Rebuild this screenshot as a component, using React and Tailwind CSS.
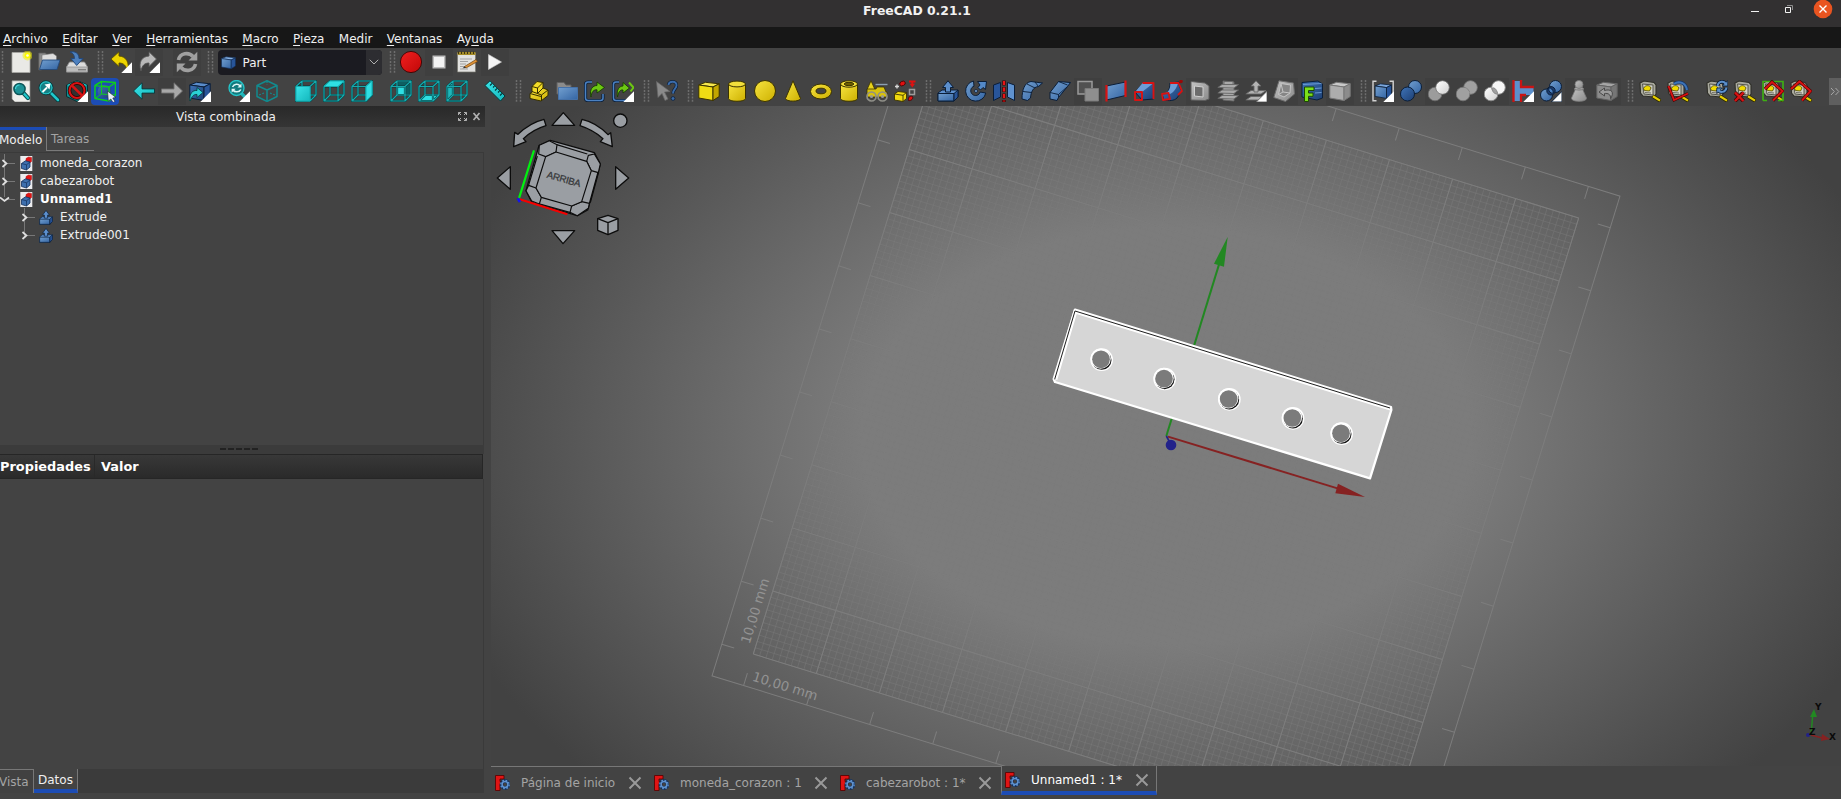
import React from "react";

const GRID_BIG = Array.from({ length: 11 }, (_, i) => i * 66);
const GRID_SMALL = Array.from({ length: 101 }, (_, i) => i * 6.6);

function Defs() {
  const g = (id, a, b) => (
    <linearGradient id={id} x1="0" y1="0" x2="1" y2="1">
      <stop offset="0" stopColor={a} />
      <stop offset="1" stopColor={b} />
    </linearGradient>
  );
  return (
    <svg width="0" height="0" className="absolute" aria-hidden="true">
      <defs>
        {g("gb", "#729fcf", "#3465a4")}
        {g("gd", "#3f74b8", "#1d3f73")}
        {g("gy", "#f7e440", "#cdb000")}
        {g("gc", "#3be4e8", "#14b8bd")}
        {g("gg", "#c4c4c4", "#8a8a8a")}
        {g("gr", "#f22020", "#c00808")}
        {g("gw", "#ffffff", "#cfcfcf")}
      </defs>
    </svg>
  );
}

const Corner = () => <path d="M22 11.300V22H11.300z" fill="#fff" />;

const Frame = ({ c = "#17a9ad" }) => (
  <g fill="none" strokeLinejoin="round">
    <path d="M1 6.500H15V21H1zM7 1H21V15H7zM1 6.500L7 1M15 6.500L21 1M15 21L21 15M1 21L7 15" stroke="#06393b" strokeWidth="2.200" />
    <path d="M1 6.500H15V21H1zM7 1H21V15H7zM1 6.500L7 1M15 6.500L21 1M15 21L21 15M1 21L7 15" stroke={c} strokeWidth="1.200" />
  </g>
);

const Tape = () => (
  <g>
    <path d="M1 3L5 1L15 2.500L17 5V14L15 17L4 16L1.500 13z" fill="#a9a99d" stroke="#2f2f29" strokeWidth="1.100" />
    <path d="M3.500 4L14 5V15L5 14z" fill="#d3d3c8" stroke="#55554c" strokeWidth="1" />
    <path d="M4.500 8.500C6 4.500 11 5 12 8L10.500 11L5.500 10.500z" fill="#f0da00" stroke="#4d4600" strokeWidth=".8" />
    <path d="M6 12.500L12 13" stroke="#6f6f66" strokeWidth="1.200" />
    <path d="M13.500 16L21.500 21" stroke="#2d2900" strokeWidth="3.800" />
    <path d="M14 16.300L21 20.600" stroke="#e6ce00" strokeWidth="2.200" />
  </g>
);

const Extrude = () => (
  <g stroke="#0b1e38" strokeWidth="1" strokeLinejoin="round">
    <path d="M1 13L5 10H21V17L17 21H1z" fill="#5c8fcd" />
    <path d="M1 13.500H17V21H1z" fill="url(#gb)" />
    <path d="M17 13.500L21 10V17L17 21z" fill="#28559a" />
    <path d="M8.500 12V7.500H5.500L11 .8L16.500 7.500H13.500V12z" fill="#5c8fcd" />
  </g>
);

const Box = ({ a, b, c, s }) => (
  <g stroke={s} strokeWidth="1" strokeLinejoin="round">
    <path d="M.8 5L7.500 2.300L21.200 3.800L15 7z" fill={b} />
    <path d="M.8 5L15 7V20.500L.8 18z" fill={a} />
    <path d="M15 7L21.200 3.800V16.500L15 20.500z" fill={c} />
  </g>
);

const SyncBlue = () => (
  <g fill="none">
    <path d="M11.500 6C12.500 .5 18.500 .5 20 4.500M20.500 7.500C19.500 13 13.500 13 12 9.500" stroke="#0b1e38" strokeWidth="3.600" />
    <path d="M21.800 .5V6H16.300zM10.800 13.500V8H16.300z" fill="#5c90cc" stroke="#0b1e38" strokeWidth=".8" />
    <path d="M11.500 6C12.500 .5 18.500 .5 20 4.500M20.500 7.500C19.500 13 13.500 13 12 9.500" stroke="#5c90cc" strokeWidth="2" />
  </g>
);

const ICONS = {
  newdoc: (
    <g>
      <path d="M2 1.500H20V21.500H2z" fill="#e9e9e6" stroke="#a8a8a5" strokeWidth=".8" />
      <circle cx="17.500" cy="4.500" r="5" fill="#f4f000" opacity=".5" />
      <circle cx="17.500" cy="4.500" r="3" fill="#fdf900" />
      <circle cx="17.500" cy="4.500" r="1.300" fill="#fffde0" />
    </g>
  ),
  open: (
    <g>
      <path d="M.8 2H7.500L9 4H17V12L3 19H.8z" fill="#8b8b8b" stroke="#5a5a5a" strokeWidth=".8" />
      <path d="M4 4L15 2.500L18.500 5V13H4z" fill="#dedede" stroke="#777" strokeWidth=".6" />
      <path d="M4.500 9H22L19 18.500H1.500z" fill="url(#gb)" stroke="#24497c" strokeWidth=".9" />
    </g>
  ),
  save: (
    <g>
      <path d="M3.500 11H18.500L21.500 16V21H.5V16z" fill="#dcdcdc" stroke="#8d8d8d" strokeWidth=".9" />
      <path d="M.5 16H21.500V21H.5z" fill="#bdbdbd" stroke="#8d8d8d" strokeWidth=".7" />
      <path d="M12 18.700H20" stroke="#7f7f7f" strokeWidth="1.400" />
      <path d="M4 1C9 0 13 2 13 7.500H17L10.700 14.500L5 7.500H8.500C8.500 4 7 2 4 1z" fill="#4d80be" stroke="#1f467c" strokeWidth=".9" />
    </g>
  ),
  undo: (
    <g>
      <path d="M1 8L9 .8V5C16 5.500 20 11 17.500 21C16.500 14.500 13.500 12 9 12V15.500z" fill="#edd400" stroke="#5b4f00" strokeWidth=".9" />
      <Corner />
    </g>
  ),
  redo: (
    <g>
      <path d="M18.500 8L11 .8V5C4 5.500 0 11 3 20C4 14.500 6.500 12 11 12V15.500z" fill="#b9b9b9" stroke="#555" strokeWidth=".9" />
      <Corner />
    </g>
  ),
  refresh: (
    <g fill="none">
      <path d="M2.500 9C4 1.500 13 1 17 5.500M19.500 13C18 20.500 9 21 5 16.500" stroke="#a0a0a0" strokeWidth="3.600" />
      <path d="M21.300 .8V9.500H12.500zM.8 21.200V12.500H9.500z" fill="#a0a0a0" />
    </g>
  ),
  record: <circle cx="11" cy="11" r="10.600" fill="url(#gr)" stroke="#3c0303" strokeWidth=".9" />,
  stop: (
    <g>
      <path d="M4.500 4.500H17.500V17.500H4.500z" fill="#bcbcbc" />
      <path d="M6 6H16V16H6z" fill="#f3f3f3" />
    </g>
  ),
  macro: (
    <g>
      <path d="M1.500 2H19.500V21H1.500z" fill="#e2e2e0" stroke="#77776f" strokeWidth=".7" />
      <path d="M1.500 1H19.500V4H1.500z" fill="#a48c28" />
      <path d="M2.500 .5V3M5.500 .5V3M8.500 .5V3M11.500 .5V3M14.500 .5V3M17.500 .5V3" stroke="#3d3410" />
      <path d="M4 8H16M4 10.500H12M4 13H10M4 15.500H9M4 18H12" stroke="#9b9b9b" strokeWidth=".9" />
      <path d="M8.500 15.500L20 8.500L21.500 10.500L10 17z" fill="#e09338" stroke="#6e430f" strokeWidth=".7" />
      <path d="M6.500 17.300L8.500 15.500L10 17z" fill="#333" />
    </g>
  ),
  play: <path d="M4.500 3.500L17.500 11L4.500 18.500z" fill="#f5f5f5" stroke="#cfcfcf" strokeWidth=".6" />,

  fitall: (
    <g>
      <path d="M2 .8H20V22H5L2 19z" fill="#efefec" stroke="#8b8b87" strokeWidth=".7" />
      <path d="M13 12.500L18 18" stroke="#0a5053" strokeWidth="4.200" strokeLinecap="round" />
      <path d="M13 12.500L18 18" stroke="#1fc6ca" strokeWidth="2.300" strokeLinecap="round" />
      <circle cx="9.500" cy="9" r="5.600" fill="#1c9296" stroke="#0b5558" strokeWidth="1.500" />
      <path d="M5.500 9A4 4 0 0 1 9.500 5" stroke="#43d5d8" strokeWidth="1.200" fill="none" />
    </g>
  ),
  fitsel: (
    <g>
      <path d="M12 12L20 20" stroke="#063a3c" strokeWidth="4.500" strokeLinecap="round" />
      <path d="M12 12L20 20" stroke="#1fc6ca" strokeWidth="2.600" strokeLinecap="round" />
      <circle cx="8" cy="7.800" r="7" fill="#138085" stroke="#063a3c" />
      <circle cx="8" cy="7.800" r="6" fill="none" stroke="#25c6ca" strokeWidth="1.100" />
      <path d="M4.500 12L9 7.500" stroke="#fff" strokeWidth="1.800" />
      <path d="M6.500 4.500L12.500 3.500L11.500 9.500z" fill="#fff" />
    </g>
  ),
  drawstyle: (
    <g>
      <path d="M11 .5L21.500 5V16.500L11 21.500L.5 16.500V5z" fill="#128a8e" stroke="#062f31" />
      <path d="M11 .8L21 5L11 9L1 5z" fill="#25c6ca" />
      <circle cx="11" cy="10.500" r="7.500" fill="#32302f" stroke="#2a0000" strokeWidth="3.500" />
      <path d="M5.800 5.300L16.200 15.700" stroke="#d81313" strokeWidth="2.600" />
      <circle cx="11" cy="10.500" r="7.500" fill="none" stroke="#d81313" strokeWidth="2.100" />
      <Corner />
    </g>
  ),
  selview: (
    <g>
      <circle cx="10.500" cy="11.500" r="6.800" fill="url(#gd)" />
      <g fill="none" stroke="#0fce1c" strokeWidth="1.500" strokeLinejoin="round">
        <path d="M1 5.500L15 7V21L1 18.500zM1 5.500L7.500 1.500L21.500 2.500L15 7M21.500 2.500V15L15 21" />
        <path d="M7.500 1.500V14L21 15M7.500 14L1 18.500" strokeWidth="1" />
      </g>
      <path d="M13.500 11L22 17.500L18.800 18L21 21.500L19 22.500L16.800 19L14.300 21.200z" fill="#e8eef8" stroke="#24303f" strokeWidth=".7" />
    </g>
  ),
  back: <path d="M.5 11L9 2.800V8.900H21.500V13.100H9V19.200z" fill="url(#gc)" stroke="#06393b" strokeWidth=".9" />,
  forward: <path d="M21.500 11L13 2.800V8.900H.5V13.100H13V19.200z" fill="#a8a8a8" stroke="#6d6d6d" strokeWidth=".9" />,
  link: (
    <g>
      <Box a="url(#gd)" b="#5a8cca" c="#28559a" s="#0b1e38" />
      <path d="M1 21C0 13 4 10 8 10.500V7.500L14 12.500L8 17.500V14.500C5 14 3 16 1 21z" fill="#2bd0d4" stroke="#063a3c" strokeWidth=".8" />
      <Corner />
    </g>
  ),
  zoom: (
    <g>
      <path d="M13 13L20 20" stroke="#1fb4b8" strokeWidth="3.400" />
      <circle cx="8.500" cy="8" r="7.500" fill="#127a7e" stroke="#25c6ca" strokeWidth="1.300" />
      <path d="M4.500 7C6 3.500 10.500 3.500 12 6M12.800 9.500C11.500 12.500 6.500 12.500 5 10" fill="none" stroke="#dff6f6" strokeWidth="1.500" />
      <path d="M13.500 3.500V7.500H9.500zM3.600 12.800V8.800H7.600z" fill="#dff6f6" />
      <Corner />
    </g>
  ),
  iso: (
    <g fill="none" stroke="#128a8e" strokeWidth="1.500" strokeLinejoin="round">
      <path d="M11 .8L21 5.500V16.500L11 21.500L1 16.500V5.500zM1 5.500L11 10L21 5.500M11 10V21.500" />
      <path d="M11 1V5M3 15L8 13M19 15L14 13" strokeDasharray="2 1.500" strokeWidth="1.200" />
    </g>
  ),
  front: (
    <g>
      <Frame />
      <path d="M1 6.500H15V21H1z" fill="url(#gc)" stroke="#17b0b4" />
    </g>
  ),
  top: (
    <g>
      <Frame />
      <path d="M1 6.500L7 1H21L15 6.500z" fill="#2fdfe3" stroke="#17b0b4" />
    </g>
  ),
  right: (
    <g>
      <Frame />
      <path d="M15 6.500L21 1V15L15 21z" fill="#2fdfe3" stroke="#17b0b4" />
    </g>
  ),
  rear: (
    <g>
      <path d="M7 6.500H15V15H7z" fill="#2fdfe3" />
      <path d="M7 1H21V15H15V6.500H7z" fill="#0d5f62" />
      <Frame />
    </g>
  ),
  bottom: (
    <g>
      <path d="M1 21L7 15H21L15 21z" fill="#2fdfe3" />
      <Frame />
    </g>
  ),
  left: (
    <g>
      <path d="M1 6.500L7 1V15L1 21z" fill="#1fb6ba" />
      <Frame />
    </g>
  ),
  ruler: (
    <g>
      <path d="M1 5.500L6 .8L21 16L16.500 21z" fill="url(#gc)" stroke="#06393b" />
      <path d="M8 3.500L6 5.500M10.500 6L9 7.500M13 8.500L11 10.500M15.500 11L14 12.500M18 13.500L16 15.500" stroke="#06393b" strokeWidth="1.100" />
    </g>
  ),

  part: (
    <g stroke="#352e00" strokeWidth="1" strokeLinejoin="round">
      <path d="M2 13.500L6 10.500L15 8L20 10V15.500L13 21L2 18.500z" fill="url(#gy)" />
      <path d="M4 6.500L9 1.500L15 2.500V8L9.500 13.500L4 11.500z" fill="#f3dc28" />
      <path d="M4 6.500L9.500 8L15 2.500M9.500 8V13.500L13.500 15L20 10M13.500 15V21M2 13.500L13 16.500" fill="none" />
    </g>
  ),
  folder: (
    <g>
      <path d="M1 2.500H8L10 5H15V14H1z" fill="#8b8b8b" stroke="#606060" />
      <path d="M2.500 7.500H21.500V19.500H2.500z" fill="url(#gb)" stroke="#4571a8" />
    </g>
  ),
  linkmake: (
    <g>
      <path d="M8 2H4Q1.500 2 1.500 4.500V18Q1.500 20.500 4 20.500H16.500Q19 20.500 19 18V14" fill="none" stroke="#0b1e38" strokeWidth="3.200" />
      <path d="M8 2H4Q1.500 2 1.500 4.500V18Q1.500 20.500 4 20.500H16.500Q19 20.500 19 18V14" fill="none" stroke="#4b82c3" strokeWidth="1.500" />
      <path d="M7 17C5 9 9 5.500 13 5.500V2L20.500 7.500L13 13V9.800C9.500 9.500 7.500 12 7 17z" fill="#6cc712" stroke="#173d02" strokeWidth=".9" />
    </g>
  ),
  linkmore: (
    <g>
      <path d="M7 2H4Q1.500 2 1.500 4.500V18Q1.500 20.500 4 20.500H15" fill="none" stroke="#0b1e38" strokeWidth="3.200" />
      <path d="M7 2H4Q1.500 2 1.500 4.500V18Q1.500 20.500 4 20.500H15" fill="none" stroke="#4b82c3" strokeWidth="1.500" />
      <path d="M5.500 17C4 9 8 6 11 6V2.500L17.500 8L11 13V10C8 9.500 6.500 12 5.500 17z" fill="#6cc712" stroke="#173d02" strokeWidth=".9" />
      <path d="M17 2.500L21.500 7.500L18.500 11.500" fill="none" stroke="#6cc712" strokeWidth="2" />
      <Corner />
    </g>
  ),
  whats: (
    <g>
      <path d="M.5 1.500L14 11.500L8.500 12L12 19L9 20.500L6 13.500L2 17.500z" fill="#8a8a8a" stroke="#676767" strokeWidth=".7" />
      <path d="M12.500 5C13 .5 21 .5 20.500 5.500C20.300 9 17 9 17 13.500" fill="none" stroke="#0b1e38" strokeWidth="3.300" />
      <path d="M12.500 5C13 .5 21 .5 20.500 5.500C20.300 9 17 9 17 13.500" fill="none" stroke="#3b6cab" strokeWidth="1.900" />
      <circle cx="17" cy="18.500" r="1.900" fill="#3b6cab" stroke="#0b1e38" strokeWidth=".8" />
    </g>
  ),

  cube: <Box a="#f0dc14" b="#f6e74e" c="#c2a600" s="#3b3300" />,
  cylinder: (
    <g stroke="#3b3300" strokeWidth="1">
      <path d="M2.500 4V18.500C2.500 22.200 19.500 22.200 19.500 18.500V4" fill="url(#gy)" />
      <ellipse cx="11" cy="4" rx="8.500" ry="2.900" fill="#f2df3c" />
    </g>
  ),
  sphere: <circle cx="11" cy="11" r="10.500" fill="url(#gy)" stroke="#3b3300" />,
  cone: <path d="M11 .8L18.500 18.500C18 22 4 22 3.500 18.500z" fill="url(#gy)" stroke="#3b3300" />,
  torus: (
    <g stroke="#3b3300">
      <ellipse cx="11" cy="11.500" rx="10.500" ry="7.500" fill="url(#gy)" />
      <ellipse cx="11" cy="11" rx="5" ry="2.800" fill="#444" />
    </g>
  ),
  tube: (
    <g stroke="#3b3300" strokeWidth="1">
      <path d="M2.500 4V18.500C2.500 22.200 19.500 22.200 19.500 18.500V4" fill="url(#gy)" />
      <ellipse cx="11" cy="4" rx="8.500" ry="3.200" fill="#f2df3c" />
      <ellipse cx="11" cy="4" rx="4.800" ry="1.700" fill="#6d5e00" />
    </g>
  ),
  primitives: (
    <g>
      <path d="M5 .8L9 9.500H1z" fill="#e8d31a" stroke="#3b3300" strokeWidth=".8" />
      <path d="M9.500 4.500H21.500" stroke="#8ca0b2" strokeWidth="1.400" />
      <path d="M1 9H10L11 7H18L20 12H21V17H1z" fill="#d8c20e" stroke="#3b3300" strokeWidth=".8" />
      <g fill="none" stroke="#8f8f88" strokeWidth="1.700">
        <circle cx="5.500" cy="16.500" r="4.500" />
        <circle cx="16.500" cy="16.500" r="4.500" />
      </g>
      <circle cx="5.500" cy="16.500" r="1.600" fill="#9a9a94" />
      <circle cx="16.500" cy="16.500" r="1.600" fill="#9a9a94" />
    </g>
  ),
  builder: (
    <g>
      <path d="M.5 14L4 11.500L12.500 12.500V18.500L9 21.500L.5 20z" fill="#efd90f" stroke="#3b3300" strokeWidth=".9" />
      <path d="M.5 14L9 15.300L12.500 12.500M9 15.300V21.500" fill="none" stroke="#3b3300" strokeWidth=".9" />
      <path d="M3 4.500V8.500M1 6.500H5" stroke="#d8d8d8" strokeWidth="1.400" />
      <ellipse cx="8.500" cy="3.500" rx="2.900" ry="2.200" transform="rotate(-25 8.500 3.500)" fill="#df1010" stroke="#400" strokeWidth=".8" />
      <path d="M15 1.500H21.500M18.300 1.500V5" stroke="#df1010" strokeWidth="2" />
      <path d="M15.500 3.800L18.300 7.500L21 3.800z" fill="#df1010" />
      <path d="M15.500 9.500H20.500V14.500H15.500z" fill="none" stroke="#9c9c9c" strokeWidth="1.500" />
      <path d="M14.500 20.500C14 17 16 15.500 18.500 16.500C19.500 18.500 17.500 21 14.500 20.500z" fill="#df1010" stroke="#400" strokeWidth=".8" />
    </g>
  ),

  extrude: <Extrude />,
  revolve: (
    <g>
      <path d="M8.500 1A10.200 10.200 0 1 0 20.800 13L15.200 12A4.800 4.800 0 1 1 9 6.200z" fill="url(#gb)" stroke="#0b1e38" />
      <path d="M12.500 1.500L21.500 1.500L20.500 9.500L18 7.500L15.500 10L13 7.500L15 5z" fill="#5389c9" stroke="#0b1e38" />
      <circle cx="11" cy="11" r="1.500" fill="#7aa7dc" stroke="#0b1e38" strokeWidth=".8" />
    </g>
  ),
  mirror: (
    <g strokeLinejoin="round">
      <path d="M.5 5L7.500 2.500V17L.5 20.500z" fill="#28559a" stroke="#0b1e38" />
      <path d="M14.500 2.500L21.500 5V20.500L14.500 17z" fill="#5f92cf" stroke="#0b1e38" />
      <path d="M11 .5V22" stroke="#4a0000" strokeWidth="3.400" strokeDasharray="5 1.500" />
      <path d="M11 1V21.500" stroke="#e81515" strokeWidth="2.100" strokeDasharray="4 2.500" />
    </g>
  ),
  fillet: (
    <g stroke="#0b1e38" strokeLinejoin="round">
      <path d="M1 19C1 10 3.500 2.500 10 1.500L21.500 3L17.500 6.500C12 7 10 12 9.500 18L6.500 20.500z" fill="url(#gb)" />
      <path d="M2 11.500L10.500 12.500M6 4L14 8M14 2L17.500 6.500" fill="none" strokeWidth=".9" />
    </g>
  ),
  chamfer: (
    <g stroke="#0b1e38" strokeLinejoin="round">
      <path d="M9.500 1.500L21.500 2.500L18.500 6.500L9.500 17.500L8 20.500L1 19V12.500z" fill="url(#gb)" />
      <path d="M1 12.500L9.500 14.500L18.500 6.500M9.500 14.500V17.500M9.500 1.500L18.500 5" fill="none" strokeWidth=".9" />
    </g>
  ),
  face: (
    <g stroke="#7a7a7a">
      <path d="M1 1.500H15V14H1z" fill="#515151" stroke="#9a9a9a" strokeWidth="1.500" />
      <path d="M8 8.500H21.500V21H8z" fill="#8f8f8f" />
    </g>
  ),
  ruled: (
    <g>
      <path d="M1.500 6L20.500 2V15.500L1.500 20z" fill="url(#gb)" stroke="#0b1e38" />
      <path d="M1.500 5V21.500M20.500 .5V17" stroke="#d81313" strokeWidth="2.200" />
    </g>
  ),
  loft: (
    <g strokeLinejoin="round">
      <path d="M2 12L10 3H20.500V19L9 20z" fill="url(#gd)" stroke="#0b1e38" />
      <path d="M2 12L9.500 3L20 3.500L9 12z" fill="#6d9dd6" />
      <path d="M2 12H9V20H2zM9.500 3H20.500V19" fill="none" stroke="#d81313" strokeWidth="1.900" />
    </g>
  ),
  sweep: (
    <g strokeLinejoin="round">
      <path d="M1 14C7 14 9 9 9 3L18 2C18 7 19 8 21 11L16 18C13 21 8 21 3 20z" fill="url(#gd)" stroke="#0b1e38" />
      <path d="M4 13C8 12 9.500 8 9.500 3L17 2.500C16 8 13 12 9 14z" fill="#6d9dd6" />
      <path d="M1 14L7.500 13L9 19L2 20zM9 3L17.500 3L21 11L17 15" fill="none" stroke="#d81313" strokeWidth="1.800" />
      <circle cx="20" cy="1.500" r="1.800" fill="#9a0808" />
    </g>
  ),
  section: (
    <g stroke="#5d5d5d">
      <path d="M2 1.500L16 3L20 6V19L16 20.500L2 20z" fill="url(#gg)" />
      <path d="M5.500 6L14 7V17L5.500 16z" fill="#6c6c6c" stroke="#cfcfcf" />
    </g>
  ),
  sections: (
    <g stroke="#666" fill="#a9a9a9" strokeWidth=".9">
      <path d="M6 1L17 2V21L6 20z" />
      <path d="M.8 7.500L5 4.500H21.500L17 8zM.8 13L5 10H21.500L17 13.500zM.8 18.500L5 15.500H21.500L17 19z" />
      <path d="M7 1.500H16V4.500H7z" />
    </g>
  ),
  offset: (
    <g stroke="#666" fill="#b2b2b2" strokeWidth=".9">
      <path d="M.8 14L6 10.500H21L16 14zM.8 20L6 16.500H21L16 20z" />
      <path d="M9 12V6H6L11 .8L16 6H13V12z" />
      <Corner />
    </g>
  ),
  thickness: (
    <g stroke="#6c6c6c" strokeLinejoin="round">
      <path d="M6 .8L20.500 3L21.500 14L12.500 21.500L.8 17.500z" fill="url(#gg)" />
      <path d="M8 3.500L17.500 5L17 13L11 17L5.500 14.500z" fill="#868686" stroke="#c4c4c4" />
      <path d="M8 3.500L10 12L17 13M10 12L5.500 14.500" fill="none" stroke="#c4c4c4" />
    </g>
  ),
  projection: (
    <g>
      <path d="M1 2.500L17 1L21.500 4V18L16 20L1 17z" fill="url(#gd)" stroke="#0b1e38" />
      <path d="M2 4.500L20.500 3.500M14 8.500L20.500 8M14 13L20.500 12.500" stroke="#6a9ad3" />
      <path d="M3.500 7H13V10.500H7.500V13H12V16.300H7.500V21.500H3.500z" fill="#7be01a" stroke="#1d4a02" />
    </g>
  ),
  graybox: <Box a="#adadad" b="#c9c9c9" c="#8c8c8c" s="#777" />,

  compound: (
    <g>
      <g transform="translate(2.500 2) scale(.8)">
        <Box a="url(#gb)" b="#7ba7dc" c="#28559a" s="#0b1e38" />
      </g>
      <path d="M4.500 1.200H1V20.800H4.500M17.500 1.200H21.200V20.800" fill="none" stroke="#d2d2d2" strokeWidth="1.400" />
      <Corner />
    </g>
  ),
  union: (
    <g stroke="#0b1e38">
      <circle cx="15" cy="7" r="6.500" fill="url(#gb)" />
      <circle cx="7.500" cy="14" r="7" fill="url(#gd)" />
    </g>
  ),
  cut: (
    <g stroke="#6c6c6c" strokeWidth=".8">
      <circle cx="7" cy="14" r="6.800" fill="#9c9c9c" />
      <circle cx="14.500" cy="7.500" r="6.800" fill="url(#gw)" />
    </g>
  ),
  fuse: (
    <g fill="#a0a0a0" stroke="#777" strokeWidth=".8">
      <circle cx="14.500" cy="7.500" r="6.800" />
      <circle cx="7" cy="14" r="6.800" />
      <path d="M10 8L14 13L9 14z" stroke="none" />
    </g>
  ),
  common: (
    <g stroke="#8a8a8a" strokeWidth=".9">
      <circle cx="7" cy="14" r="6.800" fill="url(#gw)" />
      <circle cx="14.500" cy="7.500" r="6.800" fill="#f6f6f6" />
      <path d="M7.800 8.200Q11.500 6.500 13.800 13.400Q10 15.500 7.800 8.200z" fill="#a0a0a0" />
    </g>
  ),
  join: (
    <g>
      <path d="M1.500 1H8.500V21H1.500zM8.500 7H21.500V15H8.500z" fill="#5c90cc" />
      <path d="M1.500 0V22M9 0V7H22M9 22V15H14" fill="none" stroke="#c81414" strokeWidth="2.300" />
      <Corner />
    </g>
  ),
  split: (
    <g stroke="#0b1e38">
      <circle cx="15.500" cy="6.500" r="6" fill="url(#gb)" />
      <circle cx="6.500" cy="15" r="6" fill="url(#gb)" />
      <circle cx="11" cy="10.800" r="4.200" fill="#1b3c70" />
      <path d="M8.500 8Q12.500 7.500 13.500 13Q9 14 8.500 8z" fill="#4b82c3" stroke="#0b1e38" strokeWidth=".9" />
      <Corner />
    </g>
  ),
  pawn: (
    <g fill="url(#gg)" stroke="#777" strokeWidth=".8">
      <path d="M8 8H14L18.500 18C19 22.500 3 22.500 3.500 18z" />
      <path d="M6 9C8 10.500 14 10.500 16 9L13.500 7H8.500z" />
      <circle cx="11" cy="4.500" r="4" />
    </g>
  ),
  defeature: (
    <g>
      <Box a="#8b8b8b" b="#a5a5a5" c="#767676" s="#636363" />
      <path d="M3 12L8.500 8V10.500C15 8.500 19 12 14.500 18.500C15 14.500 12 13 8.500 13.500V16z" fill="#9c9c9c" stroke="#4a4a4a" strokeWidth="1" />
    </g>
  ),

  mlin: <Tape />,
  mang: (
    <g>
      <Tape />
      <path d="M7 4C12 0 19 3 20 10" fill="none" stroke="#17376a" strokeWidth="3.400" />
      <path d="M7 4C12 0 19 3 20 10" fill="none" stroke="#3d74b8" strokeWidth="2" />
      <path d="M1.500 6L7 20L21 13.500" fill="none" stroke="#480000" strokeWidth="3" />
      <path d="M1.500 6L7 20L21 13.500" fill="none" stroke="#d81313" strokeWidth="1.800" />
    </g>
  ),
  mref: (
    <g>
      <Tape />
      <SyncBlue />
    </g>
  ),
  mclear: (
    <g>
      <Tape />
      <path d="M1 12.500L9.500 21M9.500 12.500L1 21" stroke="#480000" strokeWidth="3.800" />
      <path d="M1 12.500L9.500 21M9.500 12.500L1 21" stroke="#d81313" strokeWidth="2.400" />
    </g>
  ),
  mtog: (
    <g>
      <Tape />
      <path d="M1 20.500V1.500H21V20.500H16M1 20.500H5" fill="none" stroke="#3fae14" strokeWidth="1.700" />
      <path d="M3 9L10 2L20.500 11L11 20.500" fill="none" stroke="#480000" strokeWidth="3.200" />
      <path d="M3 9L10 2L20.500 11L11 20.500" fill="none" stroke="#d81313" strokeWidth="2" />
    </g>
  ),
  mtog3d: (
    <g>
      <Tape />
      <path d="M1 9L9.500 1.500L20.500 11L12 20.500" fill="none" stroke="#480000" strokeWidth="3.200" />
      <path d="M1 9L9.500 1.500L20.500 11L12 20.500" fill="none" stroke="#d81313" strokeWidth="2" />
    </g>
  ),
};

function Tool({ n, off, on }) {
  return (
    <button
      aria-label={n}
      className={
        "flex h-[27px] w-7 shrink-0 items-center justify-center " +
        (on ? "rounded-sm bg-[#1c4cb5]" : off ? "bg-[#3f3f3f]" : "")
      }
    >
      <svg width="22" height="22" viewBox="0 0 22 22">
        {ICONS[n]}
      </svg>
    </button>
  );
}

const Grip = () => (
  <svg width="16" height="22" viewBox="0 0 16 22" className="shrink-0">
    <path d="M7.500 0V22M11.500 0V22" stroke="#6e6e6e" strokeWidth="1.500" strokeDasharray="2 1.300" />
  </svg>
);

const Gap = () => <div className="w-[11px] shrink-0" />;

const MENUS = [
  ["", "A", "rchivo"],
  ["", "E", "ditar"],
  ["", "V", "er"],
  ["", "H", "erramientas"],
  ["", "M", "acro"],
  ["", "P", "ieza"],
  ["Medir", "", ""],
  ["", "V", "entanas"],
  ["Ay", "u", "da"],
];

function Titlebar() {
  return (
    <header className="relative flex h-[27px] shrink-0 items-center justify-end bg-[#323031]">
      <h1 className="absolute inset-x-0 top-0 pr-[7px] text-center text-[12.400px] leading-[21px] font-bold text-[#f2f2f2]">FreeCAD 0.21.1</h1>
      <div className="mb-[9px] flex items-center">
        <svg width="90" height="20" viewBox="1751 -1 90 20">
          <path d="M1751 11.500H1759" stroke="#f2f2f2" />
          <path d="M1787 5.500H1792.500V10" fill="none" stroke="#8d8c8c" />
          <path d="M1785.500 7.500H1790.500V12.500H1785.500z" fill="none" stroke="#f2f2f2" />
          <circle cx="1823" cy="9" r="9.300" fill="#e95420" />
          <path d="M1819.500 5.500L1826.500 12.500M1826.500 5.500L1819.500 12.500" stroke="#fff" strokeWidth="1.400" />
        </svg>
      </div>
    </header>
  );
}

function MenuBar() {
  return (
    <nav className="flex h-[21px] shrink-0 items-center gap-[14.400px] bg-[#171717] pt-[2px] pl-[3px] text-[#f0f0f0]">
      {MENUS.map(([a, u, b]) => (
        <span key={a + u + b} className="whitespace-pre">
          {a}
          <span className="underline underline-offset-2">{u}</span>
          {b}
        </span>
      ))}
    </nav>
  );
}

function Toolbars() {
  return (
    <div className="flex h-[58px] shrink-0 flex-col bg-[#434343]">
      <div className="flex h-[28px] items-center">
        <div className="-ml-[9px] flex items-center"><Grip /></div>
        <Tool n="newdoc" /><Tool n="open" /><Tool n="save" />
        <Grip />
        <Tool n="undo" /><Tool n="redo" off /><div className="w-[10px]" /><Tool n="refresh" off />
        <Grip />
        <div className="mr-px ml-px flex h-[25px] w-[164px] items-center rounded-sm bg-[#1b1b21] text-[#f0f0f0]">
          <svg width="15" height="13" viewBox="0 1 22 20" preserveAspectRatio="none" className="ml-[3px]">
            <Box a="url(#gb)" b="#86b0e2" c="#28559a" s="#14305a" />
          </svg>
          <span className="ml-[6.500px] flex-1 pt-px">Part</span>
          <div className="flex h-full w-4 items-center justify-center rounded-r-sm bg-[#2d2d31]">
            <svg width="10" height="6" viewBox="0 0 10 6"><path d="M.8 .8L5 5L9.200 .8" fill="none" stroke="#b0b0b0" /></svg>
          </div>
        </div>
        <div className="-mr-[2px]"><Grip /></div>
        <Tool n="record" /><Tool n="stop" off /><Tool n="macro" /><Tool n="play" off />
      </div>
      <div className="flex h-[30px] items-center">
        <div className="-ml-[9px] flex items-center"><Grip /></div>
        <Tool n="fitall" /><Tool n="fitsel" /><Tool n="drawstyle" /><Tool n="selview" on />
        <Gap />
        <Tool n="back" /><Tool n="forward" off /><Tool n="link" />
        <Gap />
        <Tool n="zoom" /><Tool n="iso" />
        <Gap />
        <Tool n="front" /><Tool n="top" /><Tool n="right" />
        <Gap />
        <Tool n="rear" /><Tool n="bottom" /><Tool n="left" />
        <div className="w-[10px]" />
        <Tool n="ruler" />
        <Grip />
        <Tool n="part" /><Tool n="folder" /><Tool n="linkmake" /><Tool n="linkmore" />
        <Grip />
        <Tool n="whats" />
        <div className="-mr-[2px] flex"><Grip /></div>
        <Tool n="cube" /><Tool n="cylinder" /><Tool n="sphere" /><Tool n="cone" /><Tool n="torus" /><Tool n="tube" /><Tool n="primitives" /><Tool n="builder" />
        <div className="-mr-[1px] flex"><Grip /></div>
        <Tool n="extrude" /><Tool n="revolve" /><Tool n="mirror" /><Tool n="fillet" /><Tool n="chamfer" /><Tool n="face" off /><Tool n="ruled" /><Tool n="loft" /><Tool n="sweep" />
        <Tool n="section" off /><Tool n="sections" off /><Tool n="offset" off /><Tool n="thickness" off /><Tool n="projection" /><Tool n="graybox" off />
        <div className="-mr-[1px] flex"><Grip /></div>
        <Tool n="compound" /><Tool n="union" /><Tool n="cut" off /><Tool n="fuse" off /><Tool n="common" off /><Tool n="join" /><Tool n="split" /><Tool n="pawn" off /><Tool n="defeature" off />
        <div className="-mr-[1px] flex"><Grip /></div>
        <Tool n="mlin" /><Tool n="mang" />
        <Gap />
        <Tool n="mref" /><Tool n="mclear" /><Tool n="mtog" /><Tool n="mtog3d" />
        <div className="ml-auto flex h-[27px] w-3 items-center justify-center bg-[#5f5f5f]">
          <svg width="10" height="9" viewBox="0 0 10 9"><path d="M1 1L4.300 4.500L1 8M5.500 1L8.800 4.500L5.500 8" fill="none" stroke="#a8a8a8" /></svg>
        </div>
      </div>
    </div>
  );
}

const DocIcon = () => (
  <svg width="13" height="15" viewBox="0 0 13 15" className="shrink-0">
    <path d="M.3 0H12.300V15H.3z" fill="#ececee" />
    <path d="M6 2.500L8.500 1L11.500 1.500V5.500L9 7.500L6 6z" fill="#e01414" stroke="#b30d0d" strokeWidth=".5" />
    <path d="M1.500 7.500L5.500 4.800L10 6V11L6.500 14L1.500 12.500z" fill="#3d6fae" stroke="#14305a" strokeWidth=".8" />
    <path d="M1.500 7.500L6.500 8.800L10 6M6.500 8.800V14" fill="none" stroke="#14305a" strokeWidth=".7" />
  </svg>
);

function DocRow({ name, open, last }) {
  return (
    <div className="flex h-[18px] items-center">
      <svg width="20" height="18" viewBox="0 0 20 18" className="shrink-0">
        <path d={last ? "M4.500 0V7M6 9.500H15" : "M4.500 0V18M6 9.500H15"} stroke="#777" fill="none" />
        <path d={open ? "M0 7.500L4.500 11L9 7.500" : "M2.500 6L6.500 9.500L2.500 13"} fill="none" stroke="#e0e0e0" strokeWidth="1.700" />
      </svg>
      <DocIcon />
      <span className={open ? "ml-[7px] font-bold text-white" : "ml-[7px]"}>{name}</span>
    </div>
  );
}

function PartRow({ name, last }) {
  return (
    <div className="flex h-[18px] items-center pl-5">
      <svg width="19" height="18" viewBox="0 0 19 18" className="shrink-0">
        <path d={last ? "M4.500 0V12M6 9.500H15" : "M4.500 0V18M6 9.500H15"} stroke="#777" fill="none" />
        <path d="M2.500 6L6.500 9.500L2.500 13" fill="none" stroke="#e0e0e0" strokeWidth="1.700" />
      </svg>
      <svg width="14" height="15" viewBox="0 0 22 22" preserveAspectRatio="none" className="shrink-0"><Extrude /></svg>
      <span className="ml-[7px]">{name}</span>
    </div>
  );
}

function SidePanel() {
  return (
    <aside className="flex w-[491px] shrink-0 flex-col bg-[#434343] text-[#f0f0f0]">
      <div className="mr-[6px] flex h-[21px] shrink-0 items-center bg-linear-to-b from-[#292929] to-[#353535]">
        <span className="flex-1 pl-[176px] leading-[20px]">Vista combinada</span>
        <svg width="28" height="12" viewBox="0 0 28 12" fill="none" stroke="#b0b0b0">
          <path d="M4 1.500H1.500V4M7 1.500H9.500V4M4 9.500H1.500V7M7 9.500H9.500V7M1.500 1.500L4 4M9.500 1.500L7 4M1.500 9.500L4 7M9.500 9.500L7 7" strokeWidth="1" />
          <path d="M16.500 2L22.500 9M22.500 2L16.500 9" strokeWidth="1.700" />
        </svg>
      </div>
      <div className="flex h-[25px] shrink-0 items-start">
        <div className="h-[24px] w-[46px] border-t-[3px] border-[#1c4cb5]"><span className="-ml-px block leading-[21px]">Modelo</span></div>
        <div className="h-[24px] w-[48px] border-b border-l border-[#7a7a7a] pl-1 leading-[24px] text-[#a4a4a4]">Tareas</div>
      </div>
      <div className="mr-[7px] flex min-h-0 flex-1 flex-col">
        <div className="h-[293px] shrink-0 border-t border-r border-[#3a3a3a] pt-px">
          <DocRow name="moneda_corazon" />
          <DocRow name="cabezarobot" />
          <DocRow name="Unnamed1" open last />
          <PartRow name="Extrude" />
          <PartRow name="Extrude001" last />
        </div>
        <div className="flex h-[9px] shrink-0 justify-center gap-[2px] bg-[#3b3b3b] pt-[3px] pr-[6px]">
          {[0, 1, 2, 3, 4].map((i) => <i key={i} className="h-[2px] w-[6px] bg-[#222]" />)}
        </div>
        <div className="mr-px flex h-[25px] shrink-0 items-center border border-l-0 border-[#262626] bg-linear-to-b from-[#383838] to-[#2a2a2a] text-[12.900px] font-bold text-white">
          <span className="h-full w-[95px] border-r border-[#292929] leading-[24px]">Propiedades</span>
          <span className="pl-[6px] leading-[24px]">Valor</span>
        </div>
        <div className="flex-1 border-r border-[#3a3a3a]" />
        <div className="flex h-[24px] shrink-0 bg-[#3b3b3b]">
          <div className="w-[34px] shrink-0 border-t border-r border-[#777] bg-[#414141] leading-[24px] text-[#a4a4a4]"><span className="-ml-px">Vista</span></div>
          <div className="w-[44px] shrink-0 border-r border-b-[4px] border-r-[#777] border-b-[#1c4cb5] bg-[#434343] pl-1 leading-[22px]">Datos</div>
        </div>
        <div className="h-[6px] shrink-0" />
      </div>
    </aside>
  );
}

function Plate() {
  return (
    <g transform="matrix(.9556 .2950 .2950 -.9556 753.300 654)" fill="none">
      <g stroke="#7c7c7c" strokeOpacity=".45" strokeWidth="1">
        {GRID_SMALL.map((p) => <path key={p} d={`M${p} 0V660M0 ${p}H660`} />)}
      </g>
      <g stroke="#7d7d7d" strokeWidth="1">
        {GRID_BIG.map((p) => <path key={p} d={`M${p} 0V660M0 ${p}H660`} />)}
        <path d="M-33 -33H693V693H-33z" />
        {GRID_BIG.map((p) => <path key={p} d={`M${p} -33V-20M${p} 693V680M-33 ${p}H-20M693 ${p}H680`} />)}
      </g>
    </g>
  );
}

const HOLES = [[213, 418], [402, 476], [596, 537], [787, 594], [933, 640]];

function Model() {
  return (
    <g transform="translate(1030 220) scale(.33333)">
      <path d="M409 648L568 130" stroke="#228822" strokeWidth="6" />
      <path d="M593 51L552 131L582 140z" fill="#228822" />
      <path d="M409 648L422 672" stroke="#22228a" strokeWidth="5" />
      <circle cx="423" cy="675" r="16" fill="#22228a" />
      <path d="M414 650L925 806" stroke="#862222" strokeWidth="6" />
      <path d="M1005 831L924 791L916 820z" fill="#862222" />
      <path d="M135 269L1083 561L1084 570L1020 775L75 486L71 477z" fill="#d6d6d6" stroke="#fff" strokeWidth="7" strokeLinejoin="round" />
      <path d="M76 478L136 275L1082 566" fill="none" stroke="#fff" strokeWidth="12" />
      <path d="M74 478L135 273L1080 564" fill="none" stroke="#1c1c1c" strokeWidth="3" />
      {HOLES.map(([x, y]) => (
        <g key={x}>
          <circle cx={x + 2} cy={y + 1} r="34" fill="#fff" />
          <circle cx={x + 2} cy={y + 2} r="29.500" fill="#111" />
          <circle cx={x - 1} cy={y - 2} r="30.500" fill="#fff" />
          <circle cx={x} cy={y} r="26.500" fill="#7b7b7b" />
        </g>
      ))}
    </g>
  );
}

function NavCube() {
  return (
    <g transform="translate(480 100) scale(.33333)" fill="#9a9ea3" stroke="#0c0c0c" strokeWidth="4" strokeLinejoin="round">
      <path d="M250 38L284 76H216z" />
      <path d="M249 431L284 392H216z" />
      <path d="M52 234L91 200V268z" />
      <path d="M446 234L407 200V268z" />
      <path d="M192 58L198 77Q160 88 130 116L138 125L101 140L104 97L114 103Q150 68 192 58z" />
      <path d="M306 58L300 77Q340 90 369 116L361 125L397 140L392 98L384 104Q350 68 306 58z" />
      <circle cx="421" cy="62" r="20" />
      <path d="M384 346L414 356V391L384 404L353 391V356z" />
      <path d="M353 356L384 368L414 356M384 368V404" fill="none" />
      <path d="M177 137L211 121L343 158L361 192L323 330L292 347L156 307L138 272z" />
      <g strokeWidth="3.500">
        <path d="M230 134L322 162M356 216L331 308M272 338L180 312M145 258L172 168" fill="none" />
        <path d="M178 136L208 122L231 134L228 156L197 170L176 162z" />
        <path d="M343 162L361 192L355 218L334 212L320 184L325 166z" />
        <path d="M325 325L292 347L270 337L275 318L305 305L328 310z" />
        <path d="M155 303L138 272L146 256L168 264L184 292L178 312z" />
        <path d="M228 156L320 184L334 212L305 305L275 318L184 292L168 264L197 170z" />
      </g>
      <path d="M117 295L162 151" stroke="#00f210" strokeWidth="6.500" />
      <path d="M117 297L262 343" stroke="#f50000" strokeWidth="6.500" />
      <path d="M113 295L120 306" stroke="#1414f0" strokeWidth="8" />
      <text x="0" y="0" transform="translate(249 247) rotate(16)" textAnchor="middle" fill="#36383a" stroke="#36383a" strokeWidth=".8" fontSize="29" className="font-[Liberation_Sans]" textLength="105">ARRIBA</text>
    </g>
  );
}

function Viewport() {
  return (
    <svg width="1350" height="660" viewBox="491 106 1350 660" className="block shrink-0">
      <defs>
        <radialGradient id="bg" gradientUnits="userSpaceOnUse" cx="0" cy="0" r="1" gradientTransform="translate(1166 436) scale(760 520)">
          <stop offset="0" stopColor="#7c7c7c" />
          <stop offset=".4" stopColor="#7c7c7c" />
          <stop offset="1" stopColor="#424242" />
        </radialGradient>
      </defs>
      <path d="M491 106H1841V766H491z" fill="url(#bg)" />
      <Plate />
      <g fill="#939393" fontSize="13.200">
        <text transform="translate(751.500 680.500) rotate(17.150)">10,00 mm</text>
        <text transform="translate(749.500 644.500) rotate(-72.850)">10,00 mm</text>
      </g>
      <Model />
      <NavCube />
      <g strokeWidth="1.500" fill="none">
        <path d="M1811 735L1813 712" stroke="#228822" />
        <path d="M1810 717L1814 709L1817 717z" fill="#228822" />
        <path d="M1811 735L1826 739" stroke="#862222" />
        <path d="M1822 734L1830 739L1821 741z" fill="#862222" />
        <circle cx="1808" cy="735" r="2" fill="#22228a" />
      </g>
      <g fontSize="9" fontWeight="bold" fill="#0a0a0a">
        <text x="1815" y="710">Y</text>
        <text x="1829" y="740">X</text>
        <text x="1809" y="735">Z</text>
      </g>
    </svg>
  );
}

const FcIcon = () => (
  <svg width="15" height="16" viewBox="0 0 15 16" className="shrink-0">
    <path d="M.5 .5H9V4H5V6.500H8V9.500H5V15.500H.5z" fill="#e01414" stroke="#5b0303" strokeWidth=".9" />
    <circle cx="10" cy="9.500" r="3.600" fill="none" stroke="#14305a" strokeWidth="3.600" />
    <circle cx="10" cy="9.500" r="4.200" fill="none" stroke="#5f92cf" strokeWidth="1.300" strokeDasharray="1.700 1.600" />
    <circle cx="10" cy="9.500" r="2.900" fill="none" stroke="#5f92cf" strokeWidth="1.500" />
  </svg>
);

const CloseX = () => (
  <svg width="14" height="14" viewBox="0 0 14 14" className="shrink-0">
    <path d="M1.500 1.500L12.500 12.500M12.500 1.500L1.500 12.500" stroke="#999" strokeWidth="2" />
  </svg>
);

function DocTab({ name, active, box, label }) {
  return (
    <div
      className={
        "flex shrink-0 items-center " + box +
        (active
          ? " h-[29px] border-x border-b-[4px] border-x-[#777] border-b-[#1c4cb5] pt-[3px] text-white"
          : " h-[29px] border-t border-[#777] pt-[3px] text-[#a4a4a4]")
      }
    >
      <FcIcon />
      <span className={"shrink-0 whitespace-pre pl-[11px] " + label}>{name}</span>
      <CloseX />
    </div>
  );
}

export default function App() {
  return (
    <div className="flex h-[799px] w-[1841px] flex-col overflow-hidden bg-[#434343] font-['DejaVu_Sans',sans-serif] text-[12px] leading-[18px]">
      <Defs />
      <Titlebar />
      <MenuBar />
      <Toolbars />
      <div className="flex min-h-0 flex-1">
        <SidePanel />
        <main className="flex w-[1350px] shrink-0 flex-col">
          <Viewport />
          <div className="flex h-[33px]">
            <DocTab name="Página de inicio" box="w-[158px] pl-[4px]" label="w-[118px]" />
            <DocTab name="moneda_corazon : 1" box="w-[186px] pl-[5px]" label="w-[145px]" />
            <DocTab name="cabezarobot : 1*" box="w-[166px] pl-[5px]" label="w-[123px]" />
            <DocTab name="Unnamed1 : 1*" box="w-[156px] pl-[3px]" label="w-[115px]" active />
          </div>
        </main>
      </div>
    </div>
  );
}
